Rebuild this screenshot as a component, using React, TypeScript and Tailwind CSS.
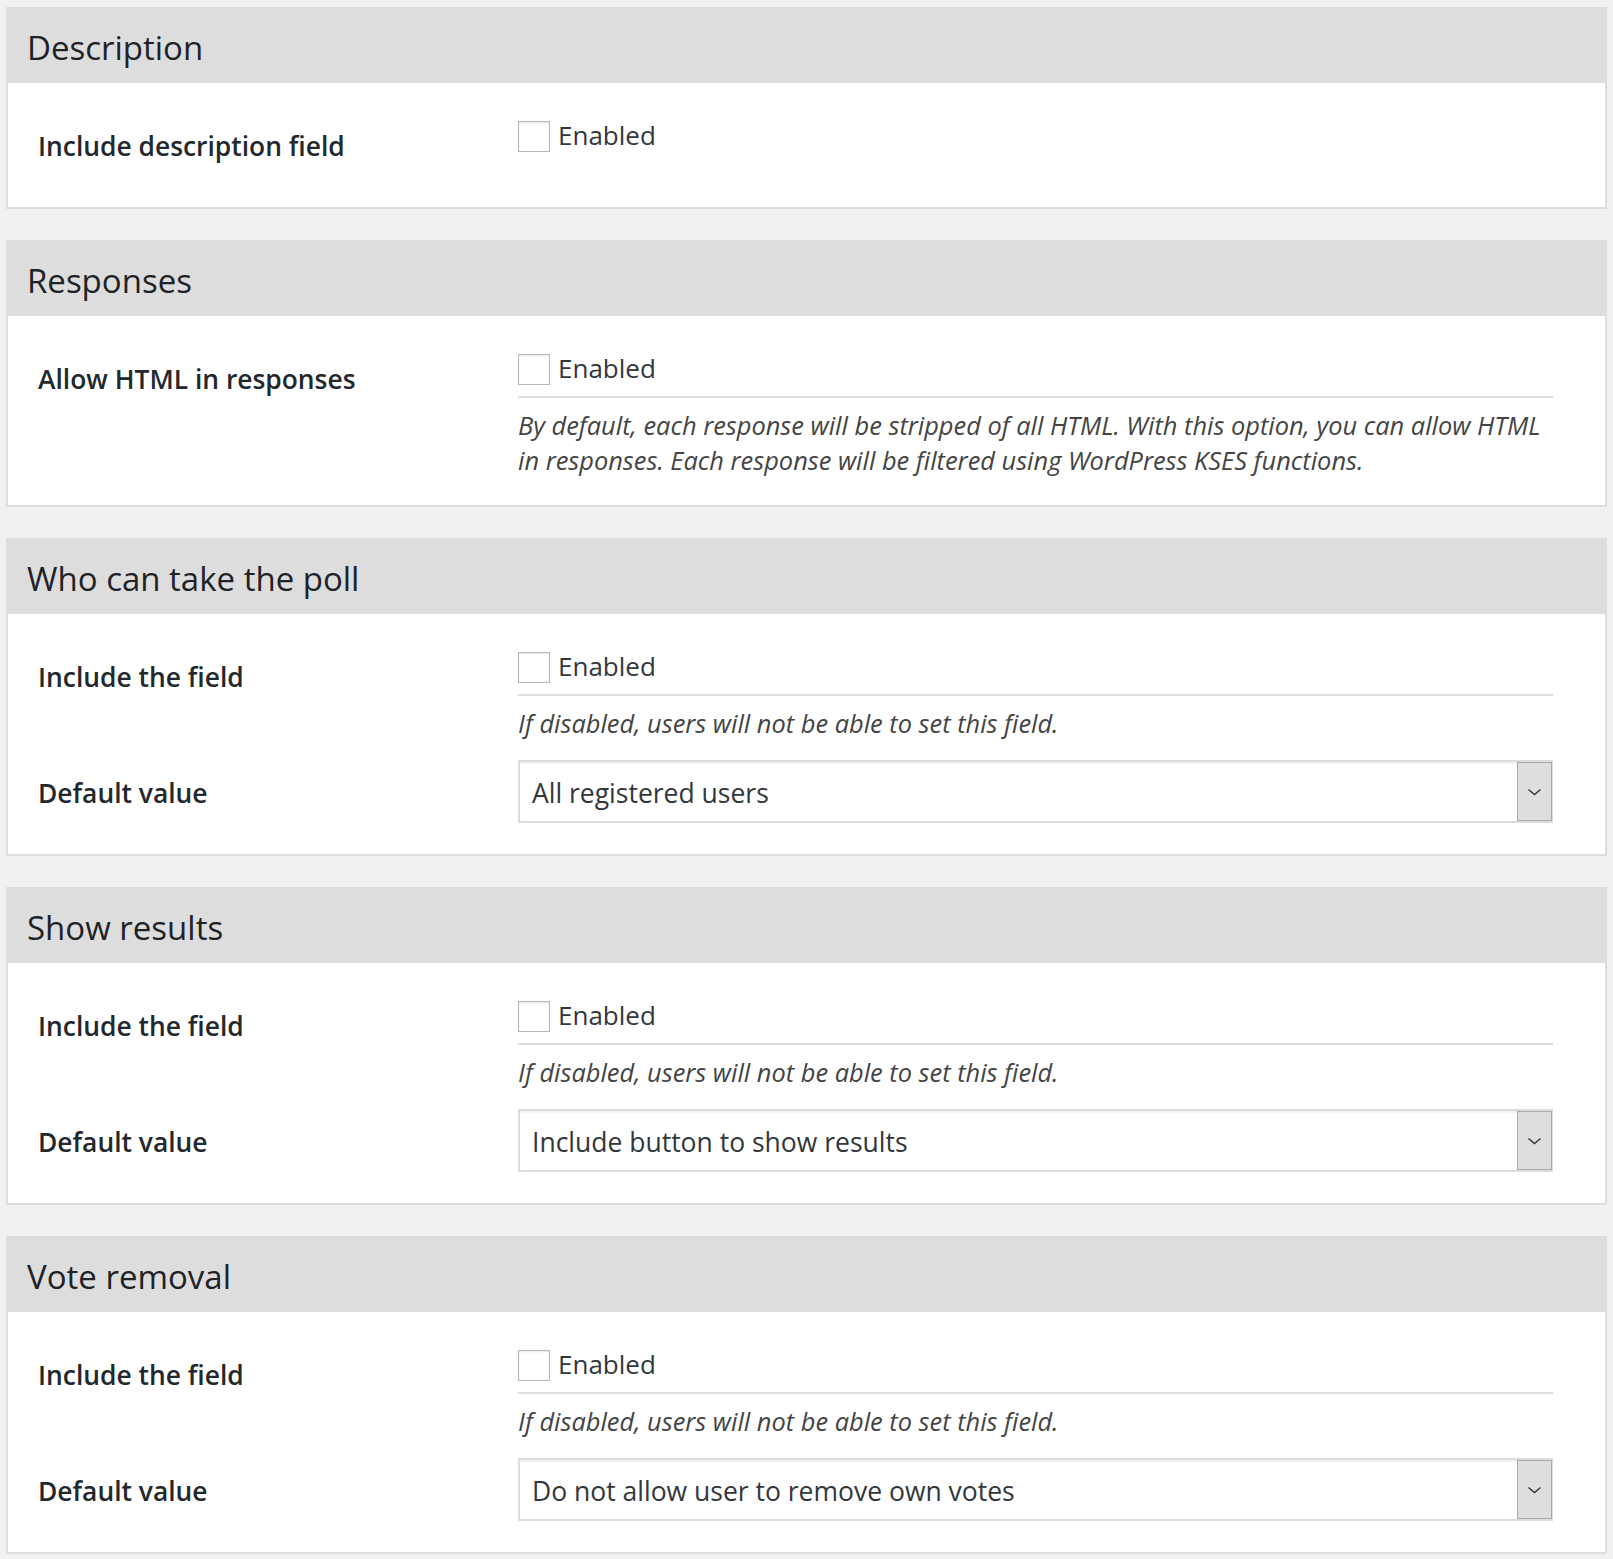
import React from 'react';

const font = { fontFamily: '"Open Sans", "Noto Sans", sans-serif' };

const Checkbox: React.FC = () => (
  <div className="flex h-[31px] items-center">
    <span className="block h-[31px] w-[32px] border-[1.5px] border-[#b4b9be] bg-white shadow-[inset_0_1px_2px_rgba(0,0,0,0.1)]" />
    <span className="mb-[3px] ml-[8px] text-[26px] leading-[31px] text-[#32373c]">Enabled</span>
  </div>
);

const Select: React.FC<{ value: string }> = ({ value }) => (
  <div className="flex h-[63px] w-full border-2 border-[#dcdcdc] bg-white shadow-[inset_0_2px_2px_rgba(0,0,0,0.06)]">
    <div className="flex flex-1 items-center pl-[12px] pt-[2px] text-[26.5px] leading-[34px] text-[#32373c]">
      {value}
    </div>
    <div className="-mr-[1px] flex w-[35px] items-center justify-center border border-[#a9a9a9] bg-[#dedede]">
      <svg width="15" height="8" viewBox="0 0 15 8" fill="none">
        <path d="M1.5 1.5 L7.5 6.5 L13.5 1.5" stroke="#333" strokeWidth="1.4" />
      </svg>
    </div>
  </div>
);

const Hint: React.FC<{ children: React.ReactNode }> = ({ children }) => (
  <p className="mt-[10px] whitespace-nowrap text-[25.4px] italic leading-[35px] text-[#444]">{children}</p>
);

const Card: React.FC<{ title: string; children: React.ReactNode }> = ({ title, children }) => (
  <section className="flex flex-col">
    <h2 className="h-[76px] bg-[#dddddd] pl-[21px] pt-[6px] text-[33px] font-medium leading-[70px] text-[#1d2327]">
      {title}
    </h2>
    <div className="border-x-2 border-b-2 border-[#dddddd] bg-white pl-[30px] pr-[52px]">{children}</div>
  </section>
);

const Label: React.FC<{ text: string; top: string }> = ({ text, top }) => (
  <div className={`w-[480px] shrink-0 text-[26.4px] font-semibold leading-[34px] text-[#23282d] ${top}`}>{text}</div>
);

const FieldCard: React.FC<{ title: string; value: string }> = ({ title, value }) => (
  <Card title={title}>
    <div className="flex">
      <Label text="Include the field" top="pt-[46px]" />
      <div className="flex-1 pt-[38px]">
        <Checkbox />
        <div className="mt-[11px] h-[2px] bg-[#dddddd]" />
        <Hint>If disabled, users will not be able to set this field.</Hint>
      </div>
    </div>
    <div className="mt-[19px] flex pb-[31px]">
      <Label text="Default value" top="pt-[16px]" />
      <div className="flex-1">
        <Select value={value} />
      </div>
    </div>
  </Card>
);

const App: React.FC = () => {
  return (
    <div className="min-h-screen bg-[#f1f1f1] px-[6px] pb-[8px] pt-[7px]" style={font}>
      <div className="flex flex-col gap-[31px]">
        <Card title="Description">
          <div className="flex">
            <Label text="Include description field" top="pt-[46px]" />
            <div className="flex-1 pb-[55px] pt-[38px]">
              <Checkbox />
            </div>
          </div>
        </Card>

        <Card title="Responses">
          <div className="flex">
            <Label text="Allow HTML in responses" top="pt-[46px]" />
            <div className="flex-1 pb-[27px] pt-[38px]">
              <Checkbox />
              <div className="mt-[11px] h-[2px] bg-[#dddddd]" />
              <Hint>
                By default, each response will be stripped of all HTML. With this option, you can allow HTML
                <br />
                in responses. Each response will be filtered using WordPress KSES functions.
              </Hint>
            </div>
          </div>
        </Card>

        <FieldCard title="Who can take the poll" value="All registered users" />
        <FieldCard title="Show results" value="Include button to show results" />
        <FieldCard title="Vote removal" value="Do not allow user to remove own votes" />
      </div>
    </div>
  );
};

export default App;
